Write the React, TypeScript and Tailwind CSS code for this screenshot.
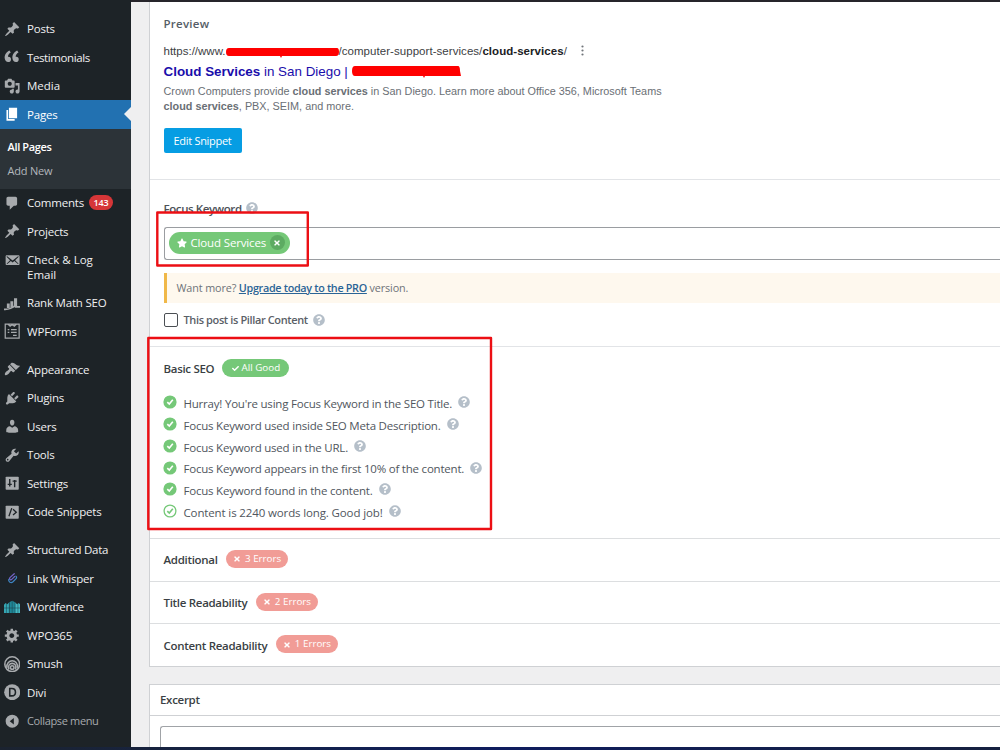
import React from 'react';
import { FaCheck, FaQuestionCircle, FaStar, FaTimes } from 'react-icons/fa';

const PIN = "M10.44 3.02l1.82-1.82 6.36 6.35-1.83 1.82c-1.05-.68-2.48-.57-3.41.36l-.75.75c-.92.93-1.04 2.35-.35 3.41l-1.83 1.82-2.41-2.41-2.8 2.79c-.42.42-3.38 2.71-3.8 2.29s1.86-3.39 2.28-3.81l2.79-2.79L4.1 9.36l1.83-1.82c1.05.69 2.48.57 3.4-.36l.75-.75c.93-.92 1.05-2.35.36-3.41z";
const QUOTE = "M8.54 12.74c0-.87-.24-1.61-.72-2.22-.73-.92-2.14-1.03-2.96-.85-.34-1.93 1.3-4.39 3.42-5.45L6.65 1.94C3.45 3.46.31 6.96.85 11.37 1.19 14.16 2.8 16 5.08 16c1 0 1.83-.29 2.48-.88.66-.59.98-1.38.98-2.38zm9.43 0c0-.87-.24-1.61-.72-2.22-.73-.92-2.14-1.03-2.96-.85-.34-1.93 1.3-4.39 3.42-5.45l-1.63-2.28c-3.2 1.52-6.34 5.02-5.8 9.43.34 2.79 1.95 4.63 4.23 4.63 1 0 1.83-.29 2.48-.88.66-.59.98-1.38.98-2.38z";
const MEDIA = "M13 11V4c0-.55-.45-1-1-1h-1.67L9 1H5L3.67 3H2c-.55 0-1 .45-1 1v7c0 .55.45 1 1 1h10c.55 0 1-.45 1-1zM7 4.5c1.38 0 2.5 1.12 2.5 2.5S8.38 9.5 7 9.5 4.5 8.38 4.5 7 5.62 4.5 7 4.5zM14 6h5v10.5c0 1.38-1.12 2.5-2.5 2.5S14 17.88 14 16.5s1.12-2.5 2.5-2.5c.17 0 .34.02.5.05V9h-3V6zm-4 8.05V13h2v3.5c0 1.38-1.12 2.5-2.5 2.5S7 17.88 7 16.5 8.12 14 9.5 14c.17 0 .34.02.5.05z";
const PAGE = "M6 15V2h10v13H6zm-1 1h8v2H3V5h2v11z";
const COMMENT = "M5 2h9c1.1 0 2 .9 2 2v7c0 1.1-.9 2-2 2h-2l-5 5v-5H5c-1.1 0-2-.9-2-2V4c0-1.1.9-2 2-2z";
const EMAIL = "M19 14.5v-9c0-.83-.67-1.5-1.5-1.5H3.49c-.83 0-1.5.67-1.5 1.5v9c0 .83.67 1.5 1.5 1.5H17.5c.83 0 1.5-.67 1.5-1.5zm-1.31-9.11c.33.33.15.67-.03.84L13.6 9.95l3.9 4.06c.12.14.2.36.06.51-.13.16-.43.15-.56.05l-4.37-3.73-2.14 1.95-2.13-1.95-4.37 3.73c-.13.1-.43.11-.56-.05-.14-.15-.06-.37.06-.51l3.9-4.06-4.06-3.72c-.18-.17-.36-.51-.03-.84s.67-.17.95.07l6.24 5.04 6.25-5.04c.28-.24.62-.4.95-.07z";
const BRUSH = "M14.48 11.06L7.41 3.99l1.5-1.5c.5-.56 2.3-.47 3.51.32 1.21.8 1.43 1.28 2.91 2.1 1.18.64 2.45 1.26 4.45.85zm-.71.71L6.7 4.7 4.93 6.47c-.39.39-.39 1.02 0 1.41l1.06 1.06c.39.39.39 1.03 0 1.42-.6.6-1.43 1.11-2.21 1.69-.35.26-.7.53-1.01.84C1.43 14.23.4 16.08 1.4 17.07c.99 1 2.84-.03 4.18-1.36.31-.31.58-.66.85-1.02.57-.78 1.08-1.61 1.69-2.21.39-.39 1.02-.39 1.41 0l1.06 1.06c.39.39 1.02.39 1.41 0z";
const PLUG = "M13.11 4.36L9.87 7.6 8 5.73l3.24-3.24c.35-.34 1.05-.2 1.56.32.52.51.66 1.21.31 1.55zm-8 1.77l.91-1.12 9.01 9.01-1.19.84c-.71.71-2.63 1.16-3.82 1.16H6.14L4.9 17.26c-.59.59-1.54.59-2.12 0-.59-.58-.59-1.53 0-2.12l1.24-1.24v-3.88c0-1.13.4-3.19 1.09-3.89zm7.26 3.97l3.24-3.24c.34-.35 1.04-.21 1.55.31.52.51.66 1.21.31 1.55l-3.24 3.25z";
const USER = "M10 9.25c-2.27 0-2.73-3.44-2.73-3.44C7 4.02 7.82 2 9.97 2c2.16 0 2.98 2.02 2.71 3.81 0 0-.41 3.44-2.68 3.44zm0 2.57L12.72 10c2.39 0 4.52 2.33 4.52 4.53v2.49s-3.65 1.13-7.24 1.13c-3.65 0-7.24-1.13-7.24-1.13v-2.49c0-2.25 1.94-4.48 4.47-4.48z";
const WRENCH = "M16.68 9.77c-1.34 1.34-3.3 1.67-4.95.99l-5.41 6.52c-.99.99-2.59.99-3.58 0s-.99-2.59 0-3.57l6.52-5.42c-.68-1.65-.35-3.61.99-4.95 1.28-1.28 3.12-1.62 4.72-1.06l-2.89 2.89 2.82 2.82 2.86-2.87c.53 1.58.18 3.39-1.08 4.65zM3.81 16.21c.4.39 1.04.39 1.43 0 .4-.4.4-1.04 0-1.43-.39-.4-1.03-.4-1.43 0-.39.39-.39 1.03 0 1.43z";
const GEAR = "M18 12h-2.18c-.17.7-.44 1.35-.81 1.93l1.54 1.54-2.1 2.1-1.54-1.54c-.58.36-1.23.63-1.91.79V19H8v-2.18c-.68-.16-1.33-.43-1.91-.79l-1.54 1.54-2.12-2.12 1.54-1.54c-.36-.58-.63-1.23-.79-1.91H1V9.03h2.17c.16-.7.44-1.35.8-1.94L2.43 5.55l2.1-2.1 1.54 1.54c.58-.37 1.24-.64 1.93-.81V2h3v2.18c.68.16 1.33.43 1.91.79l1.54-1.54 2.12 2.12-1.54 1.54c.36.59.64 1.24.8 1.94H18V12zm-8.5 1.5c1.66 0 3-1.34 3-3s-1.34-3-3-3-3 1.34-3 3 1.34 3 3 3z";

const Glyph: React.FC<{ d?: string; children?: React.ReactNode }> = ({ d, children }) => (
  <svg className="shrink-0" width="16.4" height="16.4" viewBox="0 0 20 20" fill="currentColor">
    {d ? <path fillRule="evenodd" d={d} /> : children}
  </svg>
);

const RankMathIcon = () => (
  <Glyph>
    <path d="M3.500 10.500H7V16H3.500zM7.800 7.500h3.500v8H7.800zM12.200 4h3.800v9.500h-3.800z" />
    <path d="M0 17.500c6 .5 10-1.500 14-5M13 14.500h7" fill="none" stroke="currentColor" strokeWidth="2" />
  </Glyph>
);

const FormsIcon = () => (
  <Glyph>
    <g fill="none" stroke="currentColor" strokeWidth="1.500">
      <path d="M1.500 1.500h17v17h-17zM5 1.500l2.500 2.500L10 2l2.500 2L15 1.500" />
      <path d="M4.500 8h2M8.500 8h7M4.500 11.500h2M8.500 11.500h7M11 15h4.500" />
    </g>
  </Glyph>
);

const SettingsIcon = () => (
  <Glyph>
    <path d="M3 2h14a1 1 0 0 1 1 1v14a1 1 0 0 1-1 1H3a1 1 0 0 1-1-1V3a1 1 0 0 1 1-1z" />
    <path d="M7 5v9M4.500 11.500h5M13 6v9M10.500 7.500h5" fill="none" stroke="#1d2327" strokeWidth="1.700" />
  </Glyph>
);

const CodeIcon = () => (
  <Glyph>
    <path d="M3 2h14a1 1 0 0 1 1 1v14a1 1 0 0 1-1 1H3a1 1 0 0 1-1-1V3a1 1 0 0 1 1-1z" />
    <path d="M9.500 5L6 15M11 6.500l4 3.500-4 3.500" fill="none" stroke="#1d2327" strokeWidth="1.600" />
  </Glyph>
);

const LinkIcon = () => (
  <Glyph>
    <g fill="none" strokeWidth="1.500" strokeLinecap="round">
      <path d="M12.500 4.500L7.500 9c-2 2 .5 4 2.300 2.200L13 8" stroke="#7565c8" />
      <path d="M14.500 7.500c1.200 1 1 2.300 0 3.300l-3.500 3.500c-2.500 2.200-6 .2-5.200-2.800" stroke="#3f86c4" />
    </g>
  </Glyph>
);

const WordfenceIcon = () => (
  <Glyph>
    <path d="M0 17V7l2-2 2 1.500L6.500 4v13z" fill="#36a7b4" />
    <path d="M6.500 17V4L10 2l3.500 2v13z" fill="#1f8797" />
    <path d="M13.500 17V4L16 6.500 18 5l2 2v10z" fill="#43bac4" />
    <path d="M3 5v12M6.500 4v13M10 2v15M13.500 4v13M17 5v12M0 11h20" fill="none" stroke="#1d3c46" strokeWidth=".6" />
  </Glyph>
);

const SmushIcon = () => (
  <Glyph>
    <g fill="none" stroke="currentColor" strokeWidth="1.900">
      <circle cx="10" cy="10" r="9" />
      <path d="M3.500 14.500C2.500 3 17.500 3 16.500 14.500" />
      <path d="M6 16.500C2.500 6.500 17.500 6.500 14 16.500" />
      <circle cx="10" cy="14" r="2.200" />
    </g>
  </Glyph>
);

const DiviIcon = () => (
  <Glyph>
    <circle cx="10" cy="10" r="9.800" />
    <path d="M7 5.500h2.500c6 0 6 9 0 9H7z" fill="none" stroke="#1d2327" strokeWidth="1.900" />
  </Glyph>
);

const CollapseIcon = () => (
  <Glyph>
    <path fillRule="evenodd" d="M10 2a8 8 0 1 0 0 16 8 8 0 0 0 0-16zM12 6v8l-5-4z" />
  </Glyph>
);

interface MenuItemProps {
  label: React.ReactNode;
  icon: React.ReactNode;
}

const MenuItem: React.FC<MenuItemProps> = ({ label, icon }) => (
  <a className="flex h-[28.5px] shrink-0 items-center text-[#f0f0f1]">
    <span className="ml-[4px] mr-[7px] flex w-4 justify-center text-[#a7aaad]">{icon}</span>
    <span className="whitespace-nowrap">{label}</span>
  </a>
);

const Sidebar = () => (
  <nav className="flex h-full w-[131px] shrink-0 flex-col bg-[#1d2327] pt-[14.5px] text-[11.5px] tracking-[-0.2px]">
    <MenuItem label="Posts" icon={<Glyph d={PIN} />} />
    <MenuItem label={<span className="tracking-[-0.4px]">Testimonials</span>} icon={<Glyph d={QUOTE} />} />
    <MenuItem label={<span className="tracking-normal">Media</span>} icon={<Glyph d={MEDIA} />} />
    <a className="flex h-[28.5px] shrink-0 items-center bg-[#2271b1] text-white">
      <span className="ml-[4px] mr-[7px] flex w-4 justify-center"><Glyph d={PAGE} /></span>
      <span>Pages</span>
      <svg className="ml-auto" width="7" height="14" viewBox="0 0 7 14"><path d="M7 0v14L0 7z" fill="#efeff0" /></svg>
    </a>
    <div className="flex h-[60px] shrink-0 flex-col bg-[#2c3338] pl-[7.5px] pt-[6px] text-[11px]">
      <span className="h-6 font-semibold leading-6 tracking-[-0.35px] text-white">All Pages</span>
      <span className="h-6 leading-6 text-[#b2b7bc]">Add New</span>
    </div>
    <MenuItem
      label={<span className="flex items-center gap-[5px]">Comments<b className="w-[24px] rounded-full bg-[#d63638] text-center text-[9px] font-semibold leading-[15px] text-white">143</b></span>}
      icon={<Glyph d={COMMENT} />}
    />
    <MenuItem label="Projects" icon={<Glyph d={PIN} />} />
    <a className="flex h-[43px] shrink-0 items-start pt-[6.5px] text-[#f0f0f1]">
      <span className="ml-[4px] mr-[7px] flex w-4 justify-center text-[#a7aaad]"><Glyph d={EMAIL} /></span>
      <span className="leading-[15px] tracking-normal">Check &amp; Log<br />Email</span>
    </a>
    <MenuItem label="Rank Math SEO" icon={<RankMathIcon />} />
    <MenuItem label="WPForms" icon={<FormsIcon />} />
    <div className="h-[9.5px] shrink-0" />
    <MenuItem label="Appearance" icon={<Glyph d={BRUSH} />} />
    <MenuItem label="Plugins" icon={<Glyph d={PLUG} />} />
    <MenuItem label="Users" icon={<Glyph d={USER} />} />
    <MenuItem label="Tools" icon={<Glyph d={WRENCH} />} />
    <MenuItem label="Settings" icon={<SettingsIcon />} />
    <MenuItem label="Code Snippets" icon={<CodeIcon />} />
    <div className="h-[9.5px] shrink-0" />
    <MenuItem label={<span className="tracking-[-0.27px]">Structured Data</span>} icon={<Glyph d={PIN} />} />
    <MenuItem label="Link Whisper" icon={<LinkIcon />} />
    <MenuItem label="Wordfence" icon={<WordfenceIcon />} />
    <MenuItem label="WPO365" icon={<Glyph d={GEAR} />} />
    <MenuItem label="Smush" icon={<SmushIcon />} />
    <MenuItem label="Divi" icon={<DiviIcon />} />
    <MenuItem label={<span className="text-[11px] tracking-[-0.35px] text-[#a7aaad]">Collapse menu</span>} icon={<CollapseIcon />} />
  </nav>
);

const Help = () => <FaQuestionCircle className="h-3 w-3 shrink-0 text-[#b5bfc9]" />;

const checks = [
  { text: "Hurray! You're using Focus Keyword in the SEO Title." },
  { text: "Focus Keyword used inside SEO Meta Description." },
  { text: "Focus Keyword used in the URL." },
  { text: "Focus Keyword appears in the first 10% of the content." },
  { text: "Focus Keyword found in the content." },
  { text: "Content is 2240 words long. Good job!", outline: true },
];

const CheckRow: React.FC<{ text: string; outline?: boolean }> = ({ text, outline }) => (
  <li className="flex h-[21.9px] items-center">
    <svg className="-mt-[3px] mr-[7px] shrink-0" width="14" height="14" viewBox="0 0 14 14">
      {outline
        ? <circle cx="7" cy="7" r="5.900" fill="#fff" stroke="#75c878" strokeWidth="1.300" />
        : <circle cx="7" cy="7" r="6.600" fill="#75c878" />}
      <path d="M4.300 7.100l2 2 3.500-4.300" fill="none" stroke={outline ? "#75c878" : "#fff"} strokeWidth="1.600" />
    </svg>
    <span className={`mr-[6px] whitespace-nowrap ${outline ? "tracking-[-0.13px]" : "tracking-[-0.21px]"}`}>{text}</span>
    <span className="-mt-[3px]"><Help /></span>
  </li>
);

const ErrorRow: React.FC<{ title: string; count: number }> = ({ title, count }) => (
  <div className="flex h-[42.7px] shrink-0 items-center border-t border-[#dcdee0] pl-[13.5px]">
    <span className="text-[11.5px] font-semibold tracking-[-0.3px] text-[#3a3f44]">{title}</span>
    <span className="-mt-[2px] ml-[8.5px] flex h-[18px] w-[62px] items-center justify-center gap-[4px] rounded-full bg-[#f19c96] text-[9.8px] text-white">
      <FaTimes className="mt-px h-[8px] w-[8px]" />
      <span className="mt-px">{count} Errors</span>
    </span>
  </div>
);

const App: React.FC = () => {
  return (
    <div className="relative flex h-[750px] w-[1000px] flex-col overflow-hidden bg-[#efeff0] font-['Open_Sans','Noto_Sans',sans-serif]">
      <div className="flex h-[746.5px]">
        <Sidebar />
        <main className="flex flex-1 flex-col pl-[18px]">
          <div className="-ml-[18px] h-[1.6px] shrink-0 bg-[#26252b]" />
          <div className="flex h-[665px] shrink-0 flex-col border-b border-l border-[#cfd1d4] bg-white">
            <section className="h-[177.4px] shrink-0 pl-[13.5px] pt-[14px]">
              <h3 className="text-[11.500px] font-semibold leading-4 tracking-[0.25px] text-[#555d66]">Preview</h3>
              <div className="mt-[12px] flex h-4 items-center whitespace-nowrap font-['Liberation_Sans',Arial,sans-serif] text-[11.5px] text-[#3c4043]">
                <span>https://www.</span>
                <svg width="113" height="12" viewBox="0 0 113 12" fill="#f00">
                  <path d="M3 2h108q2 0 2 4t-3 4H56l-1 2-1-2H3Q0 10 0 6t3-4z" />
                </svg>
                <span className="tracking-[0.05px]">/computer-support-services/<b className="text-[#202124]">cloud-services</b>/</span>
                <svg className="-mt-[2px] ml-[14px]" width="3" height="11" viewBox="0 0 3 11" fill="#70757a">
                  <circle cx="1.500" cy="1.500" r="1.100" /><circle cx="1.500" cy="5.500" r="1.100" /><circle cx="1.500" cy="9.500" r="1.100" />
                </svg>
              </div>
              <div className="mt-[3.5px] flex h-[18px] items-center whitespace-nowrap font-['Liberation_Sans',Arial,sans-serif] text-[13.4px] text-[#1a0dab]">
                <span><b>Cloud Services</b> in San Diego |</span>
                <svg className="-mt-[1px] ml-[4px]" width="110" height="13" viewBox="0 0 110 13" fill="#f00">
                  <path d="M3 1h103q2 0 2 5l1 5H73l-1 2-1-2H3Q0 11 0 6t3-5z" />
                </svg>
              </div>
              <p className="mt-[3px] whitespace-nowrap font-['Liberation_Sans',Arial,sans-serif] text-[10.850px] leading-[15px] text-[#6a6f75]">
                Crown Computers provide <b>cloud services</b> in San Diego. Learn more about Office 356, Microsoft Teams<br />
                <b>cloud services</b>, PBX, SEIM, and more.
              </p>
              <button className="mt-[14px] block h-[25px] w-[78px] rounded-[2px] bg-[#069de3] pt-px text-[11px] tracking-[-0.3px] text-white">Edit Snippet</button>
            </section>

            <section className="h-[167px] shrink-0 border-t border-[#e2e4e7] pl-[13.5px] pt-[21px]">
              <div className="flex h-4 items-center gap-[4px]">
                <span className="text-[11.5px] font-semibold tracking-[-0.4px] text-[#4b5157]">Focus Keyword</span>
                <span className="-mt-[2px]"><Help /></span>
              </div>
              <div className="mt-[10px] flex h-[33px] items-center rounded-l-[3px] border border-r-0 border-[#9a9da1] pl-[4px]">
                <span className="-mt-px flex h-[22px] w-[121px] items-center rounded-full bg-[#75c878] pl-[8px] text-[11.5px] text-white">
                  <FaStar className="mr-[4px] h-[10px] w-[10px]" />
                  <span className="whitespace-nowrap tracking-[-0.15px]">Cloud Services</span>
                  <span className="ml-auto mr-[5px] flex h-[15px] w-[15px] items-center justify-center rounded-full bg-[#5dab62]">
                    <FaTimes className="h-[8px] w-[8px]" />
                  </span>
                </span>
              </div>
              <div className="mt-[13px] flex h-[30px] items-center border-l-[3px] border-[#f0b849] bg-[#fef8ee] pl-[10px] text-[10.8px] tracking-[-0.12px] text-[#6d7278]">
                <span className="whitespace-nowrap">Want more? <a className="font-semibold tracking-[-0.32px] text-[#2a6496] underline">Upgrade today to the PRO</a> version.</span>
              </div>
              <div className="mt-[9px] flex h-4 items-center">
                <span className="h-[14px] w-[14px] rounded-[2px] border border-[#4b4f54]" />
                <span className="ml-[6px] mr-[5px] text-[11px] font-semibold tracking-[-0.38px] text-[#5a6067]">This post is Pillar Content</span>
                <Help />
              </div>
            </section>

            <section className="h-[192px] shrink-0 border-t border-[#e2e4e7] pl-[13.5px] pt-[11px]">
              <div className="flex h-[21px] items-center">
                <span className="pt-px text-[11.5px] font-semibold tracking-[-0.3px] text-[#3a3f44]">Basic SEO</span>
                <span className="-mt-[1px] ml-2 flex h-[18px] w-[67px] items-center justify-center gap-[3px] rounded-full bg-[#75c878] text-[9.8px] text-white">
                  <FaCheck className="mt-px h-[7px] w-[7px]" />
                  <span className="mt-px">All Good</span>
                </span>
              </div>
              <ul className="-ml-[1px] mt-[13.5px] text-[11.5px] text-[#50565d]">
                {checks.map((c) => <CheckRow key={c.text} {...c} />)}
              </ul>
            </section>

            <ErrorRow title="Additional" count={3} />
            <ErrorRow title="Title Readability" count={2} />
            <ErrorRow title="Content Readability" count={1} />
          </div>

          <div className="mt-[17.4px] flex flex-1 flex-col border-l border-t border-[#cfd1d4] bg-white">
            <h2 className="flex h-[31px] shrink-0 items-center border-b border-[#cfd1d4] pl-[10px] text-[11.5px] font-semibold tracking-[-0.3px] text-[#3a3f44]">Excerpt</h2>
            <div className="ml-[10px] mt-[10px] flex-1 rounded-tl-[3px] border-l border-t border-[#a0a3a7]" />
          </div>
        </main>
      </div>
      <div className="h-[3.5px] bg-linear-to-r from-[#1b2330] via-[#0f1c5e] to-[#16203f]" />

      {/* highlight frames */}
      <svg className="absolute left-0 top-0" width="1000" height="750" fill="none" stroke="#ec0f14" strokeWidth="2.400" strokeLinejoin="round">
        <rect x="157.300" y="212.500" width="150.500" height="53" />
        <rect x="148.300" y="338" width="342.700" height="191" />
      </svg>
    </div>
  );
};

export default App;
